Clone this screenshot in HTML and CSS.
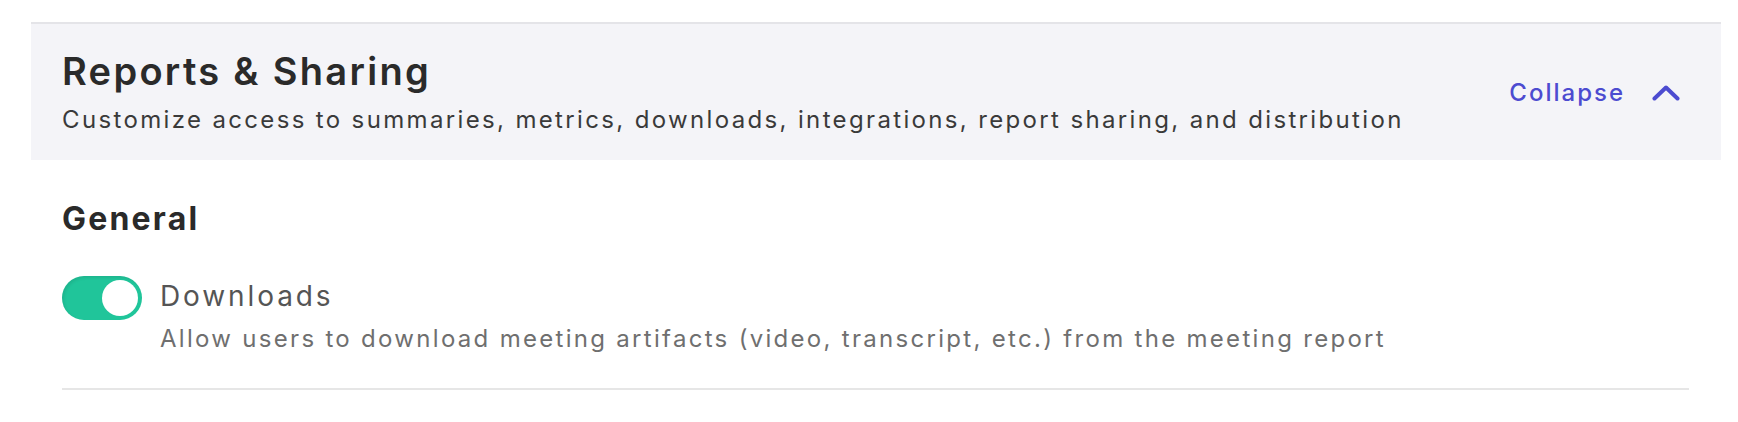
FILE: index.html
```html
<!DOCTYPE html>
<html lang="en">
<head>
<meta charset="utf-8">
<title>Reports &amp; Sharing</title>
<link rel="stylesheet" href="styles.css">
</head>
<body>
  <section class="panel">
    <header class="panel-header">
      <div class="panel-heading">
        <h2 class="panel-title">Reports &amp; Sharing</h2>
        <p class="panel-subtitle">Customize access to summaries, metrics, downloads, integrations, report sharing, and distribution</p>
      </div>
      <button class="collapse-btn" type="button">
        <span class="collapse-label">Collapse</span>
        <svg class="chevron" width="28" height="16" viewBox="0 0 28 16" aria-hidden="true">
          <path d="M2.5 13.5 L14 2.5 L25.5 13.5" fill="none" stroke="currentColor" stroke-width="4" stroke-linecap="round" stroke-linejoin="round"/>
        </svg>
      </button>
    </header>
    <div class="panel-body">
      <h3 class="group-title">General</h3>
      <div class="setting">
        <span class="toggle is-on"><span class="toggle-knob"></span></span>
        <div class="setting-text">
          <div class="setting-label">Downloads</div>
          <div class="setting-desc">Allow users to download meeting artifacts (video, transcript, etc.) from the meeting report</div>
        </div>
      </div>
      <div class="divider"></div>
    </div>
  </section>
</body>
</html>
```
FILE: styles.css
```css
* {
  box-sizing: border-box;
}

html, body {
  margin: 0;
  padding: 0;
  background: #ffffff;
}

body {
  font-family: Inter, "Open Sans", "Liberation Sans", sans-serif;
  color: #2b2b2b;
}

.panel {
  margin: 22px 0 0 31px;
  width: 1690px;
}

.panel-header {
  display: flex;
  align-items: center;
  justify-content: space-between;
  background: #f4f4f8;
  border-top: 2px solid #e4e4e8;
  padding: 25px 41px 24px 31px;
}

.panel-heading {
  display: flex;
  flex-direction: column;
}

.panel-title {
  margin: 0;
  font-size: 38px;
  line-height: 44px;
  font-weight: 600;
  color: #2a2a2a;
  letter-spacing: 2.3px;
}

.panel-subtitle {
  margin: 11px 0 0 0;
  font-size: 24px;
  line-height: 32px;
  font-weight: 400;
  color: #3a3a3a;
  letter-spacing: 2.35px;
}

.collapse-btn {
  display: flex;
  align-items: center;
  gap: 27px;
  background: none;
  border: 0;
  padding: 0;
  color: #4c4bd0;
  font-family: inherit;
  cursor: pointer;
}

.collapse-label {
  font-size: 24px;
  line-height: 32px;
  font-weight: 500;
  letter-spacing: 2px;
}

.chevron {
  display: block;
}

.panel-body {
  padding: 39px 32px 0 31px;
}

.group-title {
  margin: 0;
  font-size: 32px;
  line-height: 40px;
  font-weight: 700;
  color: #2a2a2a;
  letter-spacing: 2.2px;
}

.setting {
  display: flex;
  align-items: flex-start;
  gap: 18px;
  margin-top: 37px;
}

.toggle {
  display: flex;
  justify-content: flex-end;
  align-items: center;
  flex: none;
  width: 80px;
  height: 44px;
  padding: 4px;
  border-radius: 22px;
  background: #20c59a;
  box-shadow: inset 2px 2px 3px rgba(0, 0, 0, 0.08);
}

.toggle-knob {
  width: 36px;
  height: 36px;
  border-radius: 50%;
  background: #ffffff;
}

.setting-text {
  padding-top: 4px;
}

.setting-label {
  font-size: 28px;
  line-height: 32px;
  font-weight: 400;
  color: #555555;
  letter-spacing: 2.9px;
}

.setting-desc {
  margin-top: 11px;
  font-size: 24px;
  line-height: 32px;
  color: #6f6f6f;
  letter-spacing: 2.3px;
}

.divider {
  margin-top: 33px;
  height: 2px;
  background: #e6e6e6;
}
```
